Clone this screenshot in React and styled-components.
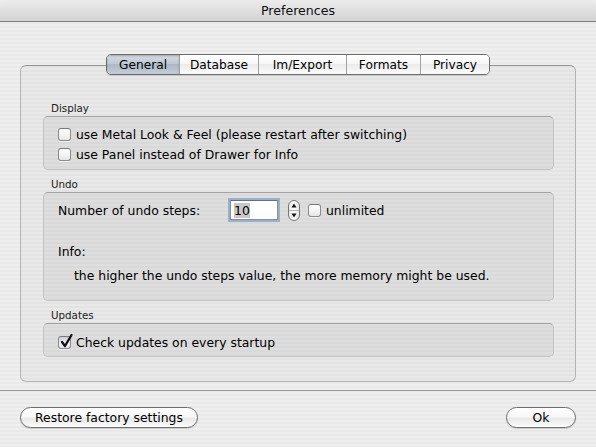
import React from "react";
import styled, { createGlobalStyle } from "styled-components";

const GlobalStyle = createGlobalStyle`
  html, body { margin: 0; padding: 0; background: #ececec; }
  body {
    font-family: "DejaVu Sans", "Liberation Sans", sans-serif;
    color: #000;
  }
  #root { width: 596px; height: 447px; }
`;

const pinstripe = `repeating-linear-gradient(to bottom, #efefef 0px, #efefef 2px, #e9e9e9 2px, #e9e9e9 4px)`;

const Window = styled.div`
  width: 596px;
  height: 447px;
  display: flex;
  flex-direction: column;
  background: ${pinstripe};
  overflow: hidden;
  border-radius: 5px 5px 0 0;
`;

const TitleBar = styled.div`
  height: 21px;
  flex: none;
  border-bottom: 1px solid #7e7e7e;
  background: linear-gradient(#ececec, #d3d3d3);
  display: flex;
  align-items: center;
  justify-content: center;
  font-size: 12.6px;
  color: #111;
  border-radius: 5px 5px 0 0;
`;

const Content = styled.div`
  flex: 1;
  display: flex;
  flex-direction: column;
  padding-top: 32px;
`;

const TabView = styled.div`
  display: flex;
  flex-direction: column;
  margin: 0 20px;
`;

const TabStrip = styled.div`
  display: flex;
  align-self: center;
  height: 21px;
  box-sizing: border-box;
  margin-bottom: -10px;
  position: relative;
  z-index: 1;
  border: 1px solid #6c6c6c;
  border-radius: 5px;
  overflow: hidden;
  box-shadow: 0 1px 1px rgba(0, 0, 0, 0.12);
`;

const Tab = styled.div`
  width: ${(p) => p.$w}px;
  box-sizing: border-box;
  display: flex;
  align-items: center;
  justify-content: center;
  font-size: 12.2px;
  color: #000;
  border-left: ${(p) => (p.$first ? "none" : "1px solid #a2a2a2")};
  background: ${(p) =>
    p.$active
      ? "linear-gradient(#d6dce4, #bcc6d2 50%, #aeb9c7 50%, #c3ccd7)"
      : "linear-gradient(#ffffff, #f6f6f6 50%, #ebebeb 50%, #fbfbfb)"};
  box-shadow: ${(p) => (p.$active ? "inset 0 1px 2px rgba(0,0,0,0.25)" : "none")};
`;

const TabBox = styled.div`
  display: flex;
  flex-direction: column;
  gap: 8px;
  box-sizing: border-box;
  border: 1px solid #b3b3b3;
  border-top-color: #939393;
  border-radius: 6px;
  background: rgba(0, 0, 0, 0.025);
  padding: 36px 21px 24px 22px;
`;

const Group = styled.div`
  display: flex;
  flex-direction: column;
`;

const GroupLabel = styled.div`
  font-size: 10.3px;
  line-height: 12px;
  margin: 0 0 2px 8px;
  color: #222;
`;

const GroupBox = styled.div`
  display: flex;
  flex-direction: column;
  border: 1px solid #c2c2c2;
  border-top-color: #a3a3a3;
  border-radius: 5px;
  background: rgba(0, 0, 0, 0.045);
  padding: ${(p) => p.$pad};
`;

const CheckRow = styled.label`
  display: flex;
  align-items: center;
  height: 20px;
  gap: 5px;
  font-size: 12.4px;
`;

const Box = styled.span`
  position: relative;
  width: 13px;
  height: 13px;
  flex: none;
  box-sizing: border-box;
  border: 1px solid #8a8a8a;
  border-top-color: #7a7a7a;
  border-radius: 3px;
  background: ${(p) =>
    p.$checked
      ? "linear-gradient(#c9cfd6, #eef1f4 60%, #dfe4ea)"
      : "linear-gradient(#ffffff, #f2f2f2 60%, #e6e6e6)"};
  box-shadow: 0 1px 0 rgba(255, 255, 255, 0.6);
`;

const CheckMark = styled.svg`
  position: absolute;
  left: 1px;
  top: -3px;
  overflow: visible;
`;

const Checkbox = ({ checked }) => (
  <Box $checked={checked}>
    {checked && (
      <CheckMark width="13" height="14" viewBox="0 0 13 14">
        <path d="M2 8 L5 12 L11.5 1" fill="none" stroke="#111" strokeWidth="2.3" strokeLinecap="round" strokeLinejoin="round" />
      </CheckMark>
    )}
  </Box>
);

const StepsRow = styled.div`
  display: flex;
  align-items: center;
  height: 26px;
  font-size: 12.4px;
`;

const StepsLabel = styled.span`
  width: 172px;
  flex: none;
`;

const Field = styled.div`
  width: 48px;
  height: 20px;
  box-sizing: border-box;
  background: #fff;
  border: 1px solid #8e8e8e;
  border-top-color: #6e6e6e;
  box-shadow: 0 0 0 2px rgba(130, 160, 200, 0.75);
  display: flex;
  align-items: center;
  padding-left: 3px;
  font-size: 12.4px;
`;

const Selected = styled.span`
  background: #c9c9c9;
  line-height: 15px;
`;

const Stepper = styled.svg`
  margin-left: 10px;
  margin-right: 8px;
  flex: none;
`;

const Unlimited = styled.span`
  margin-left: 5px;
`;

const InfoLine = styled.div`
  font-size: 12.4px;
  line-height: 16px;
  margin-top: ${(p) => p.$mt}px;
  padding-left: ${(p) => p.$indent || 0}px;
`;

const Footer = styled.div`
  margin-top: 8px;
  border-top: 1px solid #9a9a9a;
  display: flex;
  justify-content: space-between;
  padding: 16px 20px 0 20px;
`;

const Button = styled.button`
  height: 21px;
  box-sizing: border-box;
  min-width: ${(p) => p.$w || 0}px;
  padding: 0 14px;
  border: 1px solid #6e6e6e;
  border-radius: 11px;
  background: linear-gradient(#ffffff, #f7f7f7 45%, #e9e9e9 55%, #f4f4f4 85%, #ffffff);
  box-shadow: 0 1px 1px rgba(0, 0, 0, 0.15);
  font-family: "DejaVu Sans", "Liberation Sans", sans-serif;
  font-size: 12.4px;
  color: #000;
  display: flex;
  align-items: center;
  justify-content: center;
`;

const tabs = [
  { label: "General", w: 72, active: true },
  { label: "Database", w: 79 },
  { label: "Im/Export", w: 88 },
  { label: "Formats", w: 74 },
  { label: "Privacy", w: 69 },
];

export default function App() {
  return (
    <>
      <GlobalStyle />
      <Window>
        <TitleBar>Preferences</TitleBar>
        <Content>
          <TabView>
            <TabStrip>
              {tabs.map((t, i) => (
                <Tab key={t.label} $w={t.w} $active={t.active} $first={i === 0}>
                  {t.label}
                </Tab>
              ))}
            </TabStrip>
            <TabBox>
              <Group>
                <GroupLabel>Display</GroupLabel>
                <GroupBox $pad="7px 14px 5px 14px">
                  <CheckRow>
                    <Checkbox />
                    use Metal Look &amp; Feel (please restart after switching)
                  </CheckRow>
                  <CheckRow>
                    <Checkbox />
                    use Panel instead of Drawer for Info
                  </CheckRow>
                </GroupBox>
              </Group>
              <Group>
                <GroupLabel>Undo</GroupLabel>
                <GroupBox $pad="4px 14px 16px 14px">
                  <StepsRow>
                    <StepsLabel>Number of undo steps:</StepsLabel>
                    <Field>
                      <Selected>10</Selected>
                    </Field>
                    <Stepper width="12" height="21" viewBox="0 0 12 21">
                      <defs>
                        <linearGradient id="stepg" x1="0" y1="0" x2="1" y2="0">
                          <stop offset="0" stopColor="#e6e6e6" />
                          <stop offset="0.5" stopColor="#ffffff" />
                          <stop offset="1" stopColor="#e2e2e2" />
                        </linearGradient>
                      </defs>
                      <rect x="0.5" y="0.5" width="11" height="20" rx="5.5" fill="url(#stepg)" stroke="#777" />
                      <line x1="1" y1="10.5" x2="11" y2="10.5" stroke="#b5b5b5" />
                      <path d="M6 3.5 L8.5 7.5 H3.5Z" fill="#111" />
                      <path d="M6 17.5 L8.5 13.5 H3.5Z" fill="#111" />
                    </Stepper>
                    <Checkbox />
                    <Unlimited>unlimited</Unlimited>
                  </StepsRow>
                  <InfoLine $mt={21}>Info:</InfoLine>
                  <InfoLine $mt={8} $indent={16}>
                    the higher the undo steps value, the more memory might be used.
                  </InfoLine>
                </GroupBox>
              </Group>
              <Group>
                <GroupLabel>Updates</GroupLabel>
                <GroupBox $pad="8px 14px 4px 14px">
                  <CheckRow>
                    <Checkbox checked />
                    Check updates on every startup
                  </CheckRow>
                </GroupBox>
              </Group>
            </TabBox>
          </TabView>
          <Footer>
            <Button>Restore factory settings</Button>
            <Button $w={70}>Ok</Button>
          </Footer>
        </Content>
      </Window>
    </>
  );
}
